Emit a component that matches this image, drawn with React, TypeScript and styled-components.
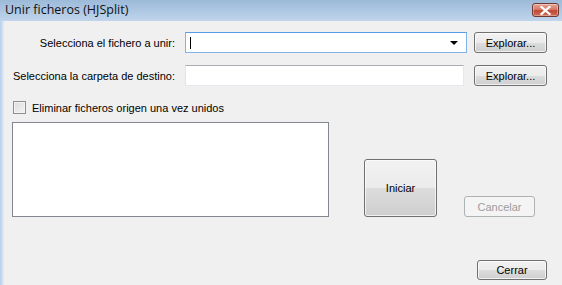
import React from 'react'
import styled, { createGlobalStyle } from 'styled-components'

const GlobalStyle = createGlobalStyle`
  html, body {
    margin: 0;
    padding: 0;
    background: #f0f0f0;
  }
  body {
    font-family: 'Liberation Sans', Arial, sans-serif;
    font-size: 11px;
    color: #000;
  }
`

function App() {
  return (
    <React.Fragment>
      <GlobalStyle />
      <Window>
        <TitleBar>
          <Title>Unir ficheros (HJSplit)</Title>
          <CloseButton aria-label="Cerrar">
            <svg width="11" height="9" viewBox="0 0 11 9">
              <path d="M1.5 1 L9.5 8 M9.5 1 L1.5 8" stroke="#ffffff" strokeWidth="2.2" strokeLinecap="square" />
            </svg>
          </CloseButton>
        </TitleBar>
        <Frame>
          <SideBorder />
          <Client>
            <FieldRow top={11}>
              <Label>Selecciona el fichero a unir:</Label>
              <Combo>
                <Caret />
                <DropArrow />
              </Combo>
              <Button width={73} height={21}>Explorar...</Button>
            </FieldRow>
            <FieldRow top={12}>
              <Label>Selecciona la carpeta de destino:</Label>
              <TextInput />
              <Button width={73} height={21}>Explorar...</Button>
            </FieldRow>
            <CheckRow>
              <CheckBox />
              <span>Eliminar ficheros origen una vez unidos</span>
            </CheckRow>
            <WorkRow>
              <ListBox />
              <Button width={73} height={58} spacing={35}>Iniciar</Button>
              <Button width={71} height={21} spacing={27} disabled>Cancelar</Button>
            </WorkRow>
            <FooterRow>
              <Button width={70} height={20}>Cerrar</Button>
            </FooterRow>
          </Client>
        </Frame>
      </Window>
    </React.Fragment>
  )
}

const Window = styled.div`
  width: 562px;
  height: 285px;
  display: flex;
  flex-direction: column;
  overflow: hidden;
  background: #f0f0f0;
`

const TitleBar = styled.div`
  height: 21px;
  flex: none;
  display: flex;
  align-items: flex-start;
  justify-content: space-between;
  background: linear-gradient(to bottom, #9dbad9 0%, #adc7e3 50%, #c1d5ec 100%);
`

const Title = styled.div`
  font-family: 'Open Sans', 'Noto Sans', sans-serif;
  font-size: 12.5px;
  line-height: 20px;
  padding-left: 5px;
  color: #111;
`

const CloseButton = styled.div`
  margin-top: 3px;
  margin-right: 3px;
  width: 27px;
  height: 14px;
  box-sizing: border-box;
  border: 1px solid #6f3a34;
  border-radius: 3px;
  display: flex;
  align-items: center;
  justify-content: center;
  background: linear-gradient(to bottom, #e6a597 0%, #d67a68 45%, #c04a35 55%, #cf6a52 100%);
  box-shadow: inset 0 0 0 1px rgba(255, 255, 255, 0.35);
`

const Frame = styled.div`
  flex: 1;
  display: flex;
`

const SideBorder = styled.div`
  width: 4px;
  flex: none;
  background: linear-gradient(to right, #b9cfe8 0%, #cfe0f3 60%, #e2ecf7 100%);
`

const Client = styled.div`
  flex: 1;
  display: flex;
  flex-direction: column;
`

const FieldRow = styled.div<{ top: number }>`
  display: flex;
  align-items: center;
  margin-top: ${p => p.top}px;
  height: 21px;
`

const Label = styled.div`
  width: 171px;
  text-align: right;
  flex: none;
  margin-right: 10px;
  white-space: nowrap;
`

const Combo = styled.div`
  position: relative;
  width: 282px;
  height: 21px;
  box-sizing: border-box;
  background: #fff;
  border: 1px solid #7eb4ea;
  border-top-color: #569de5;
  margin-right: 7px;
`

const Caret = styled.div`
  position: absolute;
  left: 4px;
  top: 4px;
  width: 1px;
  height: 12px;
  background: #000;
`

const DropArrow = styled.div`
  position: absolute;
  right: 8px;
  top: 8px;
  width: 0;
  height: 0;
  border-left: 4px solid transparent;
  border-right: 4px solid transparent;
  border-top: 4px solid #000;
`

const TextInput = styled.div`
  width: 279px;
  height: 21px;
  box-sizing: border-box;
  background: #fff;
  border: 1px solid #e3e9ef;
  border-top-color: #abadb3;
  border-left-color: #e2e3ea;
  margin-right: 10px;
`

const Button = styled.div<{ width: number; height: number; spacing?: number; disabled?: boolean }>`
  width: ${p => p.width}px;
  height: ${p => p.height}px;
  margin-left: ${p => p.spacing || 0}px;
  flex: none;
  box-sizing: border-box;
  border: 1px solid ${p => (p.disabled ? '#adb2b5' : '#707070')};
  border-radius: 3px;
  display: flex;
  align-items: center;
  justify-content: center;
  color: ${p => (p.disabled ? '#9c9c9c' : '#000')};
  background: ${p =>
    p.disabled
      ? '#f4f4f4'
      : 'linear-gradient(to bottom, #f2f2f2 0%, #ebebeb 50%, #dddddd 50%, #cfcfcf 100%)'};
  box-shadow: ${p => (p.disabled ? 'none' : 'inset 0 0 0 1px rgba(255,255,255,0.7)')};
`

const CheckRow = styled.div`
  display: flex;
  align-items: center;
  margin-top: 15px;
  margin-left: 9px;
  height: 13px;
  gap: 6px;
`

const CheckBox = styled.div`
  width: 13px;
  height: 13px;
  box-sizing: border-box;
  border: 1px solid #8e8f8f;
  background: linear-gradient(135deg, #dcdcdc 0%, #f4f4f4 100%);
  box-shadow: inset 0 0 0 1px #f4f4f4;
`

const WorkRow = styled.div`
  display: flex;
  align-items: flex-end;
  margin-top: 8px;
  margin-left: 8px;
`

const ListBox = styled.div`
  width: 317px;
  height: 95px;
  box-sizing: border-box;
  background: #fff;
  border: 1px solid #828790;
`

const FooterRow = styled.div`
  display: flex;
  justify-content: flex-end;
  margin-top: 43px;
  margin-right: 15px;
`

export default App
